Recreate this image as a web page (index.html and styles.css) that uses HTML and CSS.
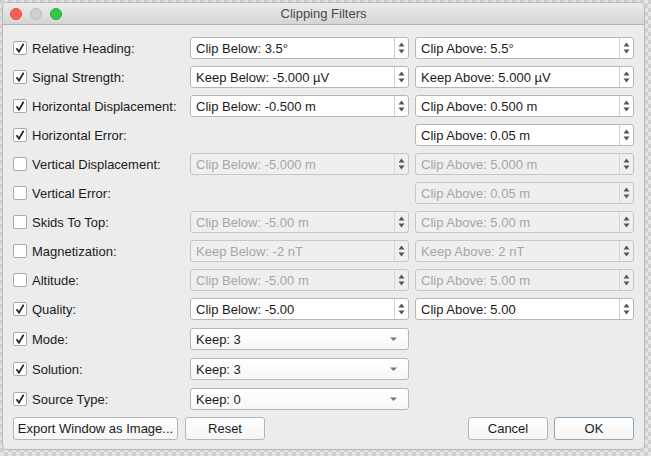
FILE: index.html
```html
<!DOCTYPE html>
<html lang="en">
<head>
    <meta charset="UTF-8">
    <title>Clipping Filters</title>
    <link rel="stylesheet" href="styles.css">
</head>
<body>
    <div class="window">
        <div class="titlebar">
            <div class="lights">
                <span class="light red"></span>
                <span class="light gray"></span>
                <span class="light green"></span>
            </div>
            <div class="title">Clipping Filters</div>
        </div>

        <div class="content">
            <div class="grid">
                <!-- Relative Heading -->
                <label class="check"><span class="box on"></span>Relative Heading:</label>
                <div class="spin"><span class="val">Clip Below: 3.5°</span><span class="arrows"></span></div>
                <div class="spin"><span class="val">Clip Above: 5.5°</span><span class="arrows"></span></div>

                <label class="check"><span class="box on"></span>Signal Strength:</label>
                <div class="spin"><span class="val">Keep Below: -5.000 µV</span><span class="arrows"></span></div>
                <div class="spin"><span class="val">Keep Above: 5.000 µV</span><span class="arrows"></span></div>

                <label class="check"><span class="box on"></span>Horizontal Displacement:</label>
                <div class="spin"><span class="val">Clip Below: -0.500 m</span><span class="arrows"></span></div>
                <div class="spin"><span class="val">Clip Above: 0.500 m</span><span class="arrows"></span></div>

                <label class="check"><span class="box on"></span>Horizontal Error:</label>
                <div></div>
                <div class="spin"><span class="val">Clip Above: 0.05 m</span><span class="arrows"></span></div>

                <label class="check"><span class="box"></span>Vertical Displacement:</label>
                <div class="spin off"><span class="val">Clip Below: -5.000 m</span><span class="arrows"></span></div>
                <div class="spin off"><span class="val">Clip Above: 5.000 m</span><span class="arrows"></span></div>

                <label class="check"><span class="box"></span>Vertical Error:</label>
                <div></div>
                <div class="spin off"><span class="val">Clip Above: 0.05 m</span><span class="arrows"></span></div>

                <label class="check"><span class="box"></span>Skids To Top:</label>
                <div class="spin off"><span class="val">Clip Below: -5.00 m</span><span class="arrows"></span></div>
                <div class="spin off"><span class="val">Clip Above: 5.00 m</span><span class="arrows"></span></div>

                <label class="check"><span class="box"></span>Magnetization:</label>
                <div class="spin off"><span class="val">Keep Below: -2 nT</span><span class="arrows"></span></div>
                <div class="spin off"><span class="val">Keep Above: 2 nT</span><span class="arrows"></span></div>

                <label class="check"><span class="box"></span>Altitude:</label>
                <div class="spin off"><span class="val">Clip Below: -5.00 m</span><span class="arrows"></span></div>
                <div class="spin off"><span class="val">Clip Above: 5.00 m</span><span class="arrows"></span></div>

                <label class="check"><span class="box on"></span>Quality:</label>
                <div class="spin"><span class="val">Clip Below: -5.00</span><span class="arrows"></span></div>
                <div class="spin"><span class="val">Clip Above: 5.00</span><span class="arrows"></span></div>

                <label class="check"><span class="box on"></span>Mode:</label>
                <div class="combo"><span class="val">Keep: 3</span><span class="drop"></span></div>
                <div></div>

                <label class="check"><span class="box on"></span>Solution:</label>
                <div class="combo"><span class="val">Keep: 3</span><span class="drop"></span></div>
                <div></div>

                <label class="check"><span class="box on"></span>Source Type:</label>
                <div class="combo"><span class="val">Keep: 0</span><span class="drop"></span></div>
                <div></div>
            </div>

            <div class="buttons">
                <button class="btn export">Export Window as Image...</button>
                <button class="btn reset">Reset</button>
                <span class="spacer"></span>
                <button class="btn cancel">Cancel</button>
                <button class="btn ok">OK</button>
            </div>
        </div>
    </div>
</body>
</html>
```

FILE: styles.css
```css
html, body {
    margin: 0;
    height: 100%;
}
body {
    background-color: #d6d6d6;
    background-image: conic-gradient(#e3e3e3 25%, #cfcfcf 0 50%, #e3e3e3 0 75%, #cfcfcf 0);
    background-size: 8px 8px;
    padding: 2px 6px 6px 2px;
    box-sizing: border-box;
    font-family: "Liberation Sans", Arial, sans-serif;
    font-size: 13px;
    color: #1a1a1a;
}
.window {
    width: 643px;
    height: 448px;
    box-sizing: border-box;
    background: #ececec;
    border: 1px solid #b9b9b9;
    border-radius: 5px;
    overflow: hidden;
    display: flex;
    flex-direction: column;
}
.titlebar {
    height: 21px;
    flex: none;
    display: flex;
    align-items: center;
    position: relative;
    background: linear-gradient(#ebebeb, #d5d5d5);
    border-bottom: 1px solid #b4b4b4;
}
.lights {
    display: flex;
    gap: 8px;
    padding-left: 7px;
}
.light {
    width: 12px;
    height: 12px;
    border-radius: 50%;
    box-sizing: border-box;
}
.red { background: #fc605b; border: 1px solid #de4a43; }
.gray { background: #d0d0d0; border: 1px solid #bdbdbd; }
.green { background: #34c84a; border: 1px solid #26a838; }
.title {
    position: absolute;
    left: 0;
    right: 0;
    text-align: center;
    color: #4a4a4a;
    font-size: 13px;
}
.content {
    flex: 1;
    padding: 12px 10px 0 10px;
    display: flex;
    flex-direction: column;
}
.grid {
    display: grid;
    grid-template-columns: 171px 219px 219px;
    grid-template-rows: repeat(10, 22px) repeat(3, 23px);
    column-gap: 6px;
    row-gap: 7px;
    align-items: end;
}
.check {
    display: flex;
    align-items: center;
    gap: 5px;
    height: 22px;
}
.box {
    width: 14px;
    height: 14px;
    box-sizing: border-box;
    background: #fff;
    border: 1px solid #a9a9a9;
    border-radius: 2px;
    flex: none;
}
.box.on {
    background: #fff url("data:image/svg+xml,%3Csvg xmlns='http://www.w3.org/2000/svg' width='12' height='12'%3E%3Cpath d='M2.5 6.2 L5 9.6 L9.6 1.8' fill='none' stroke='%23222' stroke-width='1.7'/%3E%3C/svg%3E") center/12px 12px no-repeat;
}
.spin, .combo {
    display: flex;
    align-items: center;
    box-sizing: border-box;
    height: 22px;
    background: #fff;
    border: 1px solid #b7b7b7;
    border-radius: 3px;
}
.val {
    flex: 1;
    padding-left: 5px;
    white-space: nowrap;
}
.arrows {
    width: 13px;
    height: 20px;
    border-left: 1px solid #cfcfcf;
    background: url("data:image/svg+xml,%3Csvg xmlns='http://www.w3.org/2000/svg' width='13' height='20'%3E%3Cpath d='M3.5 8.5 L6.5 4.5 L9.5 8.5 Z M3.5 11.5 L6.5 15.5 L9.5 11.5 Z' fill='%23555'/%3E%3C/svg%3E") center no-repeat;
}
.spin.off {
    background: #efefef;
    border-color: #c6c6c6;
    color: #a6a6a6;
}
.spin.off .arrows {
    border-left-color: #d6d6d6;
}
.combo {
    background: linear-gradient(#ffffff, #f7f7f7);
}
.drop {
    width: 22px;
    height: 20px;
    background: url("data:image/svg+xml,%3Csvg xmlns='http://www.w3.org/2000/svg' width='22' height='20'%3E%3Cpath d='M4 8.5 L11 8.5 L7.5 12 Z' fill='%23777'/%3E%3C/svg%3E") center no-repeat;
}
.buttons {
    display: flex;
    gap: 7px;
    margin-top: 7px;
}
.spacer {
    flex: 1;
}
.btn {
    height: 23px;
    box-sizing: border-box;
    border: 1px solid #b5b5b5;
    border-radius: 3px;
    background: linear-gradient(#ffffff, #f5f5f5);
    font-family: inherit;
    font-size: 13px;
    color: #1a1a1a;
    padding: 0;
}
.export { width: 165px; }
.reset { width: 80px; }
.cancel { width: 80px; margin-right: -1px; }
.ok { width: 80px; border-color: #8ea9bf; }
```
